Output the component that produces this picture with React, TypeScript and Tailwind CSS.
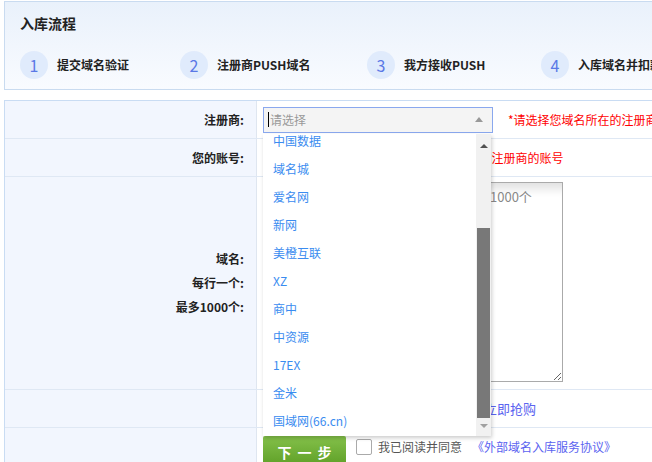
import React from 'react';

const steps = [
  { n: 1, text: '提交域名验证', w: 'w-[160px]' },
  { n: 2, text: '注册商PUSH域名', w: 'w-[187px]' },
  { n: 3, text: '我方接收PUSH', w: 'w-[174px]' },
  { n: 4, text: '入库域名并扣款', w: 'w-[200px]' },
];

const registrars = [
  '中国数据',
  '域名城',
  '爱名网',
  '新网',
  '美橙互联',
  'XZ',
  '商中',
  '中资源',
  '17EX',
  '金米',
  '国域网(66.cn)',
];

export default function App() {
  return (
    <div className="w-[652px] h-[462px] overflow-hidden bg-white text-[#222] font-['Noto_Sans_CJK_SC','Noto_Sans',sans-serif]">
      {/* 入库流程 */}
      <div className="mt-px ml-1 w-[720px] h-[89px] border border-[#c9dbf0] bg-gradient-to-b from-[#e9f1fb] to-[#f9fbff] pl-[15px] pt-[11px]">
        <h2 className="text-[14px] leading-[20px] font-bold">入库流程</h2>
        <div className="flex mt-[18px]">
          {steps.map(s => (
            <div key={s.n} className={`flex items-center shrink-0 ${s.w}`}>
              <span className="w-[28px] h-[28px] rounded-full bg-[#e0ebfc] text-[#5a78e6] text-[16px] flex items-center justify-center">
                {s.n}
              </span>
              <span className="ml-[9px] text-[12px] font-bold whitespace-nowrap">{s.text}</span>
            </div>
          ))}
        </div>
      </div>

      {/* Form */}
      <div className="mt-[10px] ml-1 w-[720px] border-t border-l border-[#c9dcf3] text-[12px]">
        {/* 注册商 */}
        <div className="flex h-[38px] border-b border-[#dfe8f4]">
          <div className="w-[252px] shrink-0 bg-[#f2f6fe] border-r border-[#dfe6f0] flex items-center justify-end pr-3 font-bold">注册商:</div>
          <div className="flex items-center pl-[6px]">
            <div className="relative">
              <div className="w-[230px] h-[26px] border border-[#8aa8ee] bg-[#f4f4f4] flex items-center pl-[4px] pr-[9px]">
                <span className="w-px h-[15px] bg-black" />
                <span className="ml-px text-[#999] flex-1">请选择</span>
                <span className="w-0 h-0 border-x-[4px] border-x-transparent border-b-[5px] border-b-[#999]" />
              </div>

              {/* dropdown list */}
              <div className="absolute left-0 top-[27px] z-10 w-[228px] h-[302px] bg-white shadow-[1px_2px_4px_rgba(0,0,0,0.2)] flex overflow-hidden">
                <ul className="flex-1 -mt-[7px] text-[#3a8cf0]">
                  {registrars.map(r => (
                    <li key={r} className="h-[28px] leading-[28px] pl-[10px] whitespace-nowrap">{r}</li>
                  ))}
                </ul>
                <div className="w-[15px] bg-[#f1f1f1] flex flex-col items-center">
                  <span className="mt-[10px] w-0 h-0 border-x-[4px] border-x-transparent border-b-[4px] border-b-[#505050]" />
                  <span className="mt-[80px] w-[13px] h-[190px] bg-[#787878]" />
                  <span className="mt-[6px] w-0 h-0 border-x-[4px] border-x-transparent border-t-[4px] border-t-[#a0a0a0]" />
                </div>
              </div>
            </div>
            <span className="ml-[15px] text-[#f00] whitespace-nowrap">*请选择您域名所在的注册商</span>
          </div>
        </div>

        {/* 您的账号 */}
        <div className="flex h-[38px] border-b border-[#dfe8f4]">
          <div className="w-[252px] shrink-0 bg-[#f2f6fe] border-r border-[#dfe6f0] flex items-center justify-end pr-3 font-bold">您的账号:</div>
          <div className="flex items-center pl-[6px]">
            <input className="w-[136px] h-[26px] border border-[#aaa] px-1 outline-none" />
            <span className="ml-[15px] text-[#f00] whitespace-nowrap">*请输入您在该注册商的账号</span>
          </div>
        </div>

        {/* 域名 */}
        <div className="flex h-[213px] border-b border-[#dfe8f4]">
          <div className="w-[252px] shrink-0 bg-[#f2f6fe] border-r border-[#dfe6f0] flex flex-col items-end justify-center pr-3 font-bold leading-[24px]">
            <span>域名:</span>
            <span>每行一个:</span>
            <span>最多1000个:</span>
          </div>
          <div className="pl-[6px] pt-[5px]">
            <textarea
              className="block w-[300px] h-[200px] border border-[#aaa] px-[5px] py-[4px] text-[13px] placeholder:text-[#888] shadow-[inset_0_14px_10px_-8px_rgba(0,0,0,0.12)] outline-none"
              placeholder="请输入要入库的域名，每行一个，最多1000个"
            />
          </div>
        </div>

        {/* 抢购 */}
        <div className="flex h-[38px] border-b border-[#dfe8f4]">
          <div className="w-[252px] shrink-0 bg-[#f2f6fe] border-r border-[#dfe6f0]" />
          <div className="flex items-center pl-[6px] text-[13px] whitespace-nowrap">
            <span className="text-[#666]">如果您暂时还没有可以入库的域名，可</span>
            <a className="text-[#5b63f0]">立即抢购</a>
          </div>
        </div>

        {/* 下一步 */}
        <div className="flex h-[40px]">
          <div className="w-[252px] shrink-0 bg-[#f2f6fe] border-r border-[#dfe6f0]" />
          <div className="flex items-start pl-[6px] pt-[8px]">
            <button className="w-[83px] h-[32px] rounded-[2px] bg-gradient-to-b from-[#84c14a] to-[#5c9d23] text-white text-[14px] font-bold tracking-[6px] pl-[6px]">
              下一步
            </button>
            <span className="ml-[10px] mt-[3px] w-[16px] h-[16px] border border-[#aaa] rounded-[2px] bg-white" />
            <span className="ml-[6px] mt-[2px] text-[#555] whitespace-nowrap">我已阅读并同意</span>
            <a className="ml-[10px] mt-[2px] text-[#5b63f0] whitespace-nowrap">《外部域名入库服务协议》</a>
          </div>
        </div>
      </div>
    </div>
  );
}
